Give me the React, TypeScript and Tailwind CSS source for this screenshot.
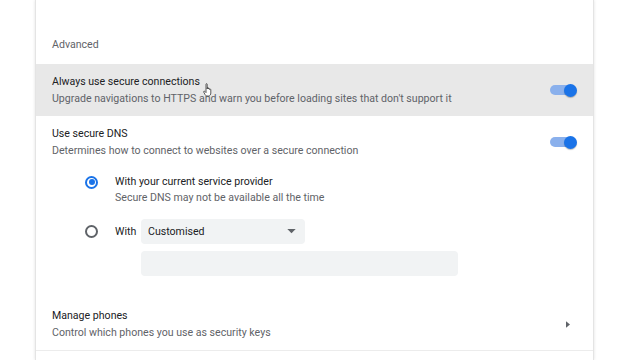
import React from 'react';

const Toggle: React.FC = () => (
  <div className="relative w-[27px] h-[14px] flex items-center">
    <div className="w-[23px] h-[10px] rounded-full bg-[#8ab0ec]" />
    <div className="absolute right-0 w-[13px] h-[13px] rounded-full bg-[#1a73e8] shadow-[0_1px_1px_rgba(0,0,0,0.25)]" />
  </div>
);

const Radio: React.FC<{ checked?: boolean }> = ({ checked }) => (
  <div
    className={`w-[13px] h-[13px] rounded-full border-2 flex items-center justify-center ${
      checked ? 'border-[#1a73e8]' : 'border-[#5f6368]'
    }`}
  >
    {checked && <div className="w-[6px] h-[6px] rounded-full bg-[#1a73e8]" />}
  </div>
);

// little pointer hand the mouse is showing over the first row
const HandCursor: React.FC = () => (
  <svg className="absolute left-[203px] top-[83px]" width="11" height="14" viewBox="0 0 11 14">
    <path
      d="M3 1.2 C3 0.5 4.2 0.5 4.2 1.2 L4.2 6 L4.2 5 C4.2 4.3 5.4 4.3 5.4 5 L5.4 6 C5.4 5.3 6.6 5.3 6.6 6 L6.6 6.6 C6.6 6 7.8 6 7.8 6.6 L7.8 10 C7.8 11.5 7 13 5.5 13 L4 13 C3 13 2.5 12.3 2 11.5 L0.7 9 C0.4 8.4 1.2 7.8 1.8 8.4 L3 9.6 Z"
      fill="#fff"
      stroke="#333"
      strokeWidth="0.8"
      strokeLinejoin="round"
    />
  </svg>
);

export default function App() {
  return (
    <div
      className="relative w-[640px] h-[360px] bg-white overflow-hidden"
      style={{ fontFamily: 'Roboto, "Liberation Sans", sans-serif' }}
    >
      <div className="ml-[35px] w-[559px] h-[360px] bg-white border-x border-[#e4e4e4] shadow-[0_0_3px_rgba(0,0,0,0.12)] flex flex-col">
        {/* section header */}
        <div className="h-[64px] flex items-end pb-[11px] pl-[16px]">
          <span className="text-[10.6px] leading-[16px] text-[#5f6368]">Advanced</span>
        </div>

        {/* https-first row (hovered) */}
        <div className="h-[52px] bg-[#e8e8e8] flex items-center pl-[16px] pr-[16px]">
          <div className="flex-1 text-[10.6px] leading-[17px]">
            <div className="text-[#202124]">Always use secure connections</div>
            <div className="text-[#5f6368]">
              Upgrade navigations to HTTPS and warn you before loading sites that don't support it
            </div>
          </div>
          <Toggle />
        </div>

        {/* secure dns */}
        <div className="h-[52px] flex items-center pl-[16px] pr-[16px]">
          <div className="flex-1 text-[10.6px] leading-[17px]">
            <div className="text-[#202124]">Use secure DNS</div>
            <div className="text-[#5f6368]">Determines how to connect to websites over a secure connection</div>
          </div>
          <Toggle />
        </div>

        <div className="pl-[49px] pt-[6px] text-[10.6px]">
          <div className="flex items-start">
            <div className="w-[30px] h-[16px] flex items-center">
              <Radio checked />
            </div>
            <div className="leading-[16px]">
              <div className="text-[#202124]">With your current service provider</div>
              <div className="text-[#5f6368]">Secure DNS may not be available all the time</div>
            </div>
          </div>

          <div className="flex items-center mt-[13px] h-[25px]">
            <div className="w-[30px] flex items-center">
              <Radio />
            </div>
            <span className="text-[#202124] w-[26px]">With</span>
            <div className="w-[164px] h-[25px] rounded-[4px] bg-[#f1f3f4] flex items-center pl-[7px] pr-[9px]">
              <span className="flex-1 text-[#202124]">Customised</span>
              <svg width="9" height="5" viewBox="0 0 10 6">
                <path d="M0 0 L10 0 L5 5 Z" fill="#5f6368" />
              </svg>
            </div>
          </div>

          <div className="ml-[56px] mt-[7px] w-[317px] h-[25px] rounded-[4px] bg-[#f1f3f4]" />
        </div>

        {/* manage phones */}
        <div className="mt-[22px] h-[53px] flex items-center pl-[16px] pr-[23px] border-b border-[#ececec]">
          <div className="flex-1 text-[10.6px] leading-[17px]">
            <div className="text-[#202124]">Manage phones</div>
            <div className="text-[#5f6368]">Control which phones you use as security keys</div>
          </div>
          <svg width="4" height="7" viewBox="0 0 5 8">
            <path d="M0 0 L5 4 L0 8 Z" fill="#5f6368" />
          </svg>
        </div>
      </div>
      <HandCursor />
    </div>
  );
}
